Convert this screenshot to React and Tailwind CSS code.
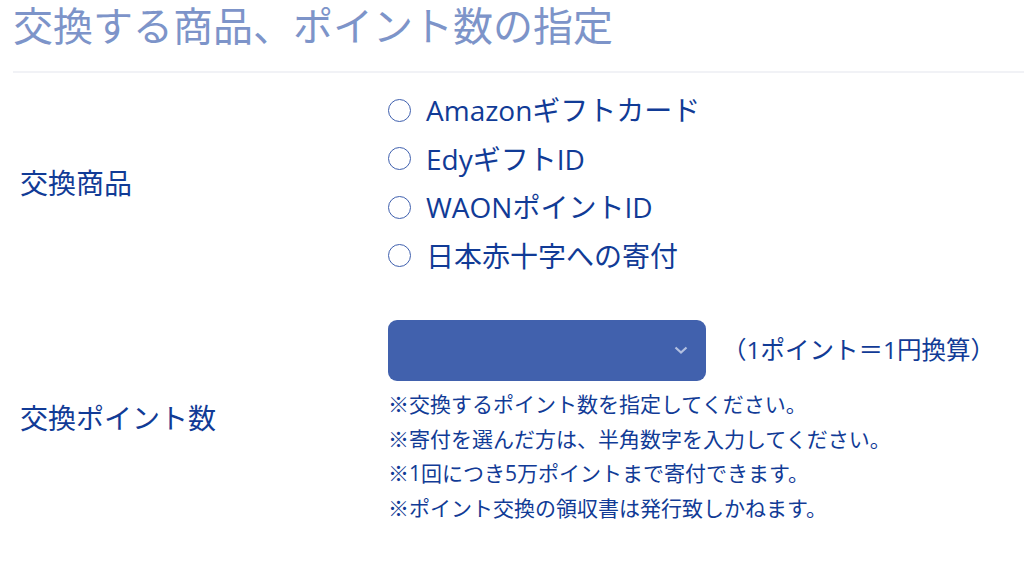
export default function App() {
  const items = ['Amazonギフトカード', 'EdyギフトID', 'WAONポイントID', '日本赤十字への寄付']
  const notes = [
    '※交換するポイント数を指定してください。',
    '※寄付を選んだ方は、半角数字を入力してください。',
    '※1回につき5万ポイントまで寄付できます。',
    '※ポイント交換の領収書は発行致しかねます。',
  ]
  return (
    <div className="min-h-screen bg-white text-[#113b96]" style={{ fontFamily: '"Open Sans", "Noto Sans CJK JP", sans-serif' }}>
      <h1 className="pl-[13px] h-[71px] text-[40px] leading-[52px] text-[#7d94c9]">交換する商品、ポイント数の指定</h1>
      <div className="ml-[13px] h-[2px] bg-[#f1f2f6]" />

      <div className="grid grid-cols-[368px_1fr] pl-[20px] pt-[13px]">
        <div className="flex items-center text-[28px]">交換商品</div>
        <div className="flex flex-col">
          {items.map((t) => (
            <label key={t} className="flex items-center h-[48.5px] text-[28px]">
              <span className="w-[23px] h-[23px] rounded-full border-[1.5px] border-[#3f60ae] mr-[15px]" />
              {t}
            </label>
          ))}
        </div>

        <div className="flex items-center text-[28px] pt-[30px]">交換ポイント数</div>
        <div className="flex flex-col pt-[40px]">
          <div className="flex items-center">
            <div className="relative w-[318px] h-[61px] rounded-[9px] bg-[#4161ad]">
              <svg className="absolute right-[17px] top-[25px]" width="16" height="10" viewBox="0 0 16 10" fill="none">
                <path d="M2.5 2.5 L8 7.5 L13.5 2.5" stroke="#b3c0e0" strokeWidth="2.2" />
              </svg>
            </div>
            <span className="ml-[16px] text-[24.5px]">（1ポイント＝1円換算）</span>
          </div>
          <div className="mt-[6px] flex flex-col text-[21px]">
            {notes.map((n) => (
              <div key={n} className="h-[34.5px] leading-[34.5px]">{n}</div>
            ))}
          </div>
        </div>
      </div>
    </div>
  )
}
